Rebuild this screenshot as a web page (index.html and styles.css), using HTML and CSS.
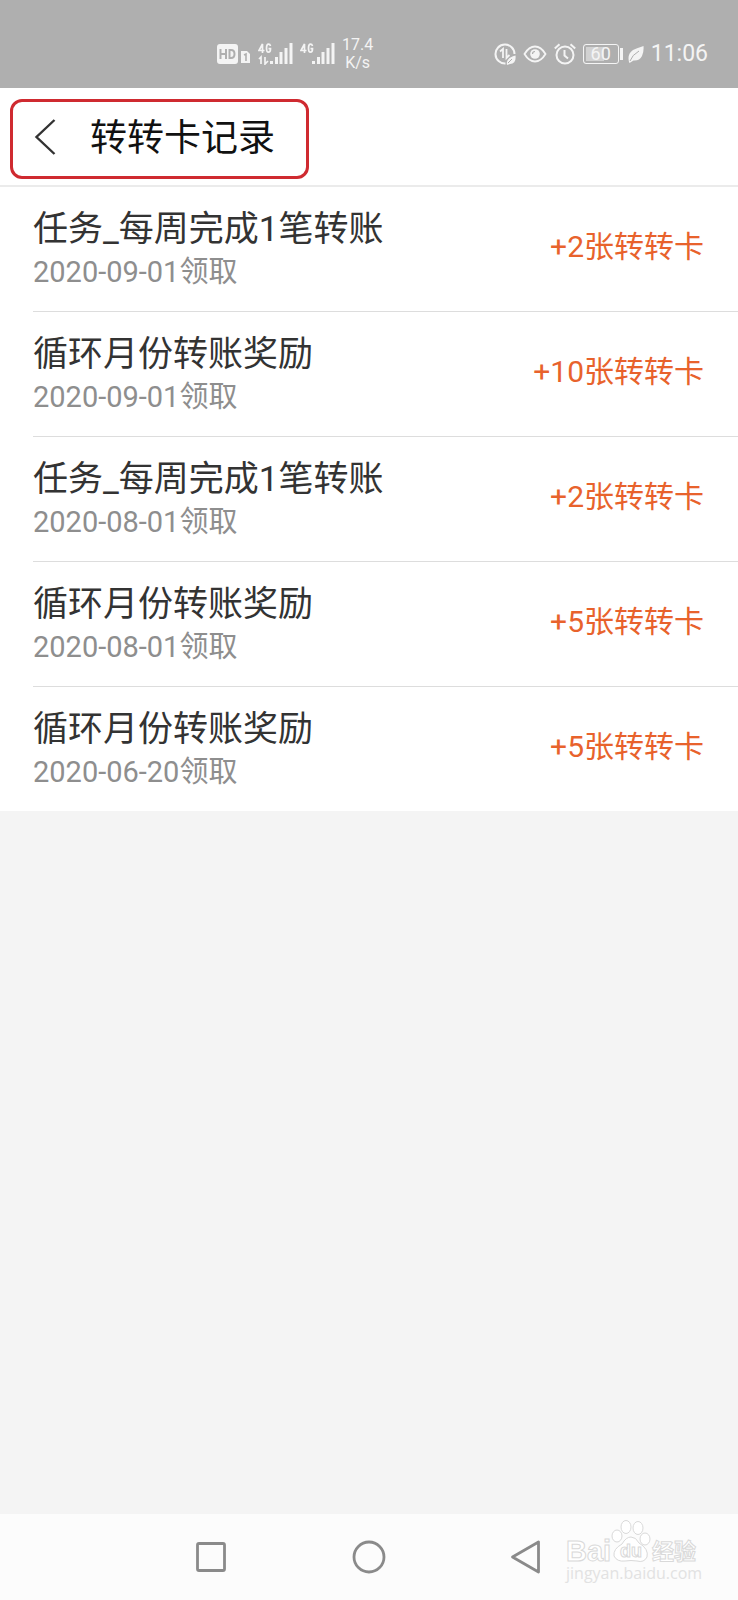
FILE: index.html
```html
<!DOCTYPE html>
<html lang="zh-CN">
<head>
<meta charset="utf-8">
<meta name="viewport" content="width=device-width, initial-scale=1">
<title>转转卡记录</title>
<link rel="stylesheet" href="styles.css">
</head>
<body>
<div class="status">
  <div class="status-left">
    <svg width="34" height="22" viewBox="0 0 34 22" aria-hidden="true">
      <rect x="0" y="1" width="21" height="20" rx="3" fill="#f4f4f4"/>
      <path d="M3.500 6v10M9 6v10M3.500 11H9M12.500 7v8h1.500q3.500 0 3.500-4t-3.500-4z" fill="none" stroke="#afafaf" stroke-width="2"/>
      <path d="M24 8h6l3 3v9h-9z" fill="#f4f4f4"/>
      <path d="M27 12l2-1v7" fill="none" stroke="#afafaf" stroke-width="1.600"/>
    </svg>
    <svg width="35" height="22" viewBox="0 0 35 22" aria-hidden="true">
      <g fill="none" stroke="#f4f4f4" stroke-width="1.700">
        <path d="M4.500 10V1L1 7.500h5.500M12.500 3Q12 1.200 10.500 1.200 8.500 1.200 8.500 5.200T10.500 9.200q2 0 2-3.500h-2"/>
        <path d="M1 16l2-2v7M7 14v7l3-3"/>
      </g>
      <path d="M12 18h3v3h-3zM17 14h3v7h-3zM21.500 9h3v12h-3zM26.500 5h3v16h-3zM31.500 0h3v21h-3z" fill="#f4f4f4"/>
    </svg>
    <svg width="35" height="22" viewBox="0 0 35 22" aria-hidden="true">
      <path d="M4.500 10V1L1 7.500h5.500M12.500 3Q12 1.200 10.500 1.200 8.500 1.200 8.500 5.200T10.500 9.200q2 0 2-3.500h-2" fill="none" stroke="#f4f4f4" stroke-width="1.700"/>
      <path d="M12 18h3v3h-3zM17 14h3v7h-3zM21.500 9h3v12h-3zM26.500 5h3v16h-3zM31.500 0h3v21h-3z" fill="#f4f4f4"/>
    </svg>
    <div class="speed"><span>17.4</span><span>K/s</span></div>
  </div>
  <div class="status-right">
    <svg width="22" height="22" viewBox="0 0 22 22" aria-hidden="true">
      <path d="M11.500 20.500A9.500 9.500 0 1 1 20.500 11" fill="none" stroke="#f4f4f4" stroke-width="2"/>
      <path d="M6 8.500l3-2.500v9M12.500 6v9l3-3" fill="none" stroke="#f4f4f4" stroke-width="1.800"/>
      <path d="M21.500 12.500q1 8.500-5.500 8.500l-3 1q-1.500-7 8.500-9.500z" fill="#f4f4f4"/>
      <path d="M14 20l4-4" stroke="#afafaf"/>
    </svg>
    <svg width="24" height="22" viewBox="0 0 24 22" aria-hidden="true">
      <path d="M1.500 11Q6 3.500 12 3.500T22.500 11Q18 18.500 12 18.500T1.500 11z" fill="none" stroke="#f4f4f4" stroke-width="1.800"/>
      <circle cx="12" cy="11" r="4.800" fill="#f4f4f4"/>
      <path d="M9.500 11q0-2.500 2.500-2.500" fill="none" stroke="#afafaf" stroke-width="1.200"/>
    </svg>
    <svg width="22" height="22" viewBox="0 0 22 22" aria-hidden="true">
      <g fill="none" stroke="#f4f4f4" stroke-width="2">
        <circle cx="11" cy="12" r="8.500"/>
        <path d="M.8 5.500L5.500 1.200M21.200 5.500L16.500 1.200M10.500 7v5.500l3.500 3"/>
      </g>
    </svg>
    <div class="battery"><span>60</span></div>
    <svg width="16" height="20" viewBox="0 0 16 20" aria-hidden="true">
      <path d="M15.500 2q.5 6-1.500 10-2.500 5-8.500 4.500L1.500 19 1 18q-2-8 4-12 3-1.500 10.500-4z" fill="#f4f4f4"/>
      <path d="M2 17q2-6 9-10" fill="none" stroke="#afafaf"/>
    </svg>
    <time class="clock">11:06</time>
  </div>
</div>

<header class="header">
  <button class="back" type="button" aria-label="返回">
    <svg width="22" height="38" viewBox="0 0 22 38" aria-hidden="true"><path d="M20.500 2L2.500 19l18 17" fill="none" stroke="#333" stroke-width="2.400"/></svg>
  </button>
  <h1 class="title">转转卡记录</h1>
  <div class="highlight"></div>
</header>

<main class="main">
  <ul class="list">
    <li class="row"><div class="info"><p class="name">任务_每周完成1笔转账</p><p class="date">2020-09-01领取</p></div><span class="amount">+2张转转卡</span></li>
    <li class="row"><div class="info"><p class="name">循环月份转账奖励</p><p class="date">2020-09-01领取</p></div><span class="amount">+10张转转卡</span></li>
    <li class="row"><div class="info"><p class="name">任务_每周完成1笔转账</p><p class="date">2020-08-01领取</p></div><span class="amount">+2张转转卡</span></li>
    <li class="row"><div class="info"><p class="name">循环月份转账奖励</p><p class="date">2020-08-01领取</p></div><span class="amount">+5张转转卡</span></li>
    <li class="row"><div class="info"><p class="name">循环月份转账奖励</p><p class="date">2020-06-20领取</p></div><span class="amount">+5张转转卡</span></li>
  </ul>
</main>

<nav class="nav">
  <button class="key" type="button" aria-label="最近任务">
    <svg width="34" height="34" viewBox="0 0 34 34" aria-hidden="true"><rect x="3.500" y="3.500" width="27" height="27" rx="1.500" fill="none" stroke="#8a8a8a" stroke-width="2.800"/></svg>
  </button>
  <button class="key" type="button" aria-label="主页">
    <svg width="34" height="34" viewBox="0 0 34 34" aria-hidden="true"><circle cx="17" cy="17" r="15" fill="none" stroke="#8a8a8a" stroke-width="2.800"/></svg>
  </button>
  <button class="key" type="button" aria-label="返回">
    <svg width="34" height="34" viewBox="0 0 34 34" aria-hidden="true"><path d="M28.500 2v30L2.500 17z" fill="none" stroke="#8a8a8a" stroke-width="2.800" stroke-linejoin="round"/></svg>
  </button>
  <svg class="mark" width="136" height="70" viewBox="0 0 136 70" aria-hidden="true">
    <g class="mark-line">
      <text class="mark-latin" x="0" y="40">Bai</text>
      <text class="mark-han" x="86" y="38">经验</text>
      <ellipse cx="60" cy="6" rx="5" ry="6.500"/>
      <ellipse cx="72" cy="7" rx="5" ry="6.500"/>
      <ellipse cx="51" cy="15" rx="5" ry="6"/>
      <ellipse cx="79" cy="18" rx="5" ry="6"/>
      <path d="M65 16q5 0 8 6 10 6 8 14-3 6-10 4-6-1-12 0-8 1-11-5-1-7 8-12 4-7 9-7z"/>
      <text class="mark-du" x="54" y="36">du</text>
    </g>
    <text class="mark-url" x="0" y="58">jingyan.baidu.com</text>
  </svg>
</nav>
</body>
</html>
```
FILE: styles.css
```css
* { box-sizing: border-box; }

body {
  margin: 0;
  min-height: 100vh;
  display: flex;
  flex-direction: column;
  background: #f4f4f4;
  color: #333;
  font-family: Roboto, "Noto Sans CJK SC", sans-serif;
}

h1, p, ul { margin: 0; padding: 0; font-weight: 400; }

button { border: 0; padding: 0; background: none; display: flex; }

svg { display: block; flex: none; }

.status {
  height: 88px;
  padding: 20px 30px 0 217px;
  display: flex;
  justify-content: space-between;
  align-items: center;
  background: #afafaf;
  color: #f4f4f4;
}

.status-left,
.status-right { display: flex; align-items: center; gap: 7px; }

.speed {
  display: flex;
  flex-direction: column;
  text-align: center;
  font-size: 16px;
  line-height: 18px;
}

.battery {
  position: relative;
  width: 36px;
  height: 20px;
  margin-right: 2px;
  border: 1px solid #f4f4f4;
  border-radius: 3px;
  background: linear-gradient(90deg, #d2d2d2 60%, #afafaf 60%);
  box-shadow: inset 0 0 0 2px #afafaf;
  font-size: 18px;
  line-height: 18px;
  text-align: center;
}

.battery::after {
  content: "";
  position: absolute;
  top: 3px;
  right: -5px;
  width: 3px;
  height: 12px;
  background: #f4f4f4;
}

.clock { font-size: 23px; line-height: 28px; }

.header {
  position: relative;
  height: 99px;
  padding: 0 34px;
  display: flex;
  align-items: center;
  gap: 34px;
  background: #fff;
  border-bottom: 2px solid #ebebeb;
}

.title { padding-top: 5px; color: #111; font-size: 37px; line-height: 48px; }

.highlight {
  position: absolute;
  top: 11px;
  left: 10px;
  width: 299px;
  height: 80px;
  border: 3px solid #cf2a30;
  border-radius: 12px;
  pointer-events: none;
}

.main { flex: 1; }

.list { list-style: none; background: #fff; }

.row {
  margin-left: 33px;
  padding-right: 34px;
  display: flex;
  justify-content: space-between;
  align-items: center;
  border-bottom: 1px solid #ddd;
}

.row:last-child { border-bottom: 0; }

.info { padding: 22px 0 18px; }

.name { font-size: 35px; line-height: 42px; }

.date { color: #8e8e8e; font-size: 29px; line-height: 42px; }

.amount { padding-bottom: 4px; color: #e8622c; font-size: 30px; line-height: 42px; }

.nav {
  position: relative;
  height: 86px;
  padding: 0 132px;
  display: flex;
  justify-content: space-around;
  align-items: center;
  background: #fcfcfc;
}

.mark {
  position: absolute;
  right: 36px;
  top: 7px;
  overflow: visible;
}

.mark-line { fill: #fff; stroke: #d9d9d9; stroke-width: 1px; }

.mark-latin { font: 700 29px "Liberation Sans", sans-serif; }

.mark-han { font: 700 22px "Noto Sans CJK SC", sans-serif; }

.mark-du { font: 700 18px "Liberation Sans", sans-serif; }

.mark-url { fill: #e2e2e2; font: 400 16px "Open Sans", sans-serif; }
```
